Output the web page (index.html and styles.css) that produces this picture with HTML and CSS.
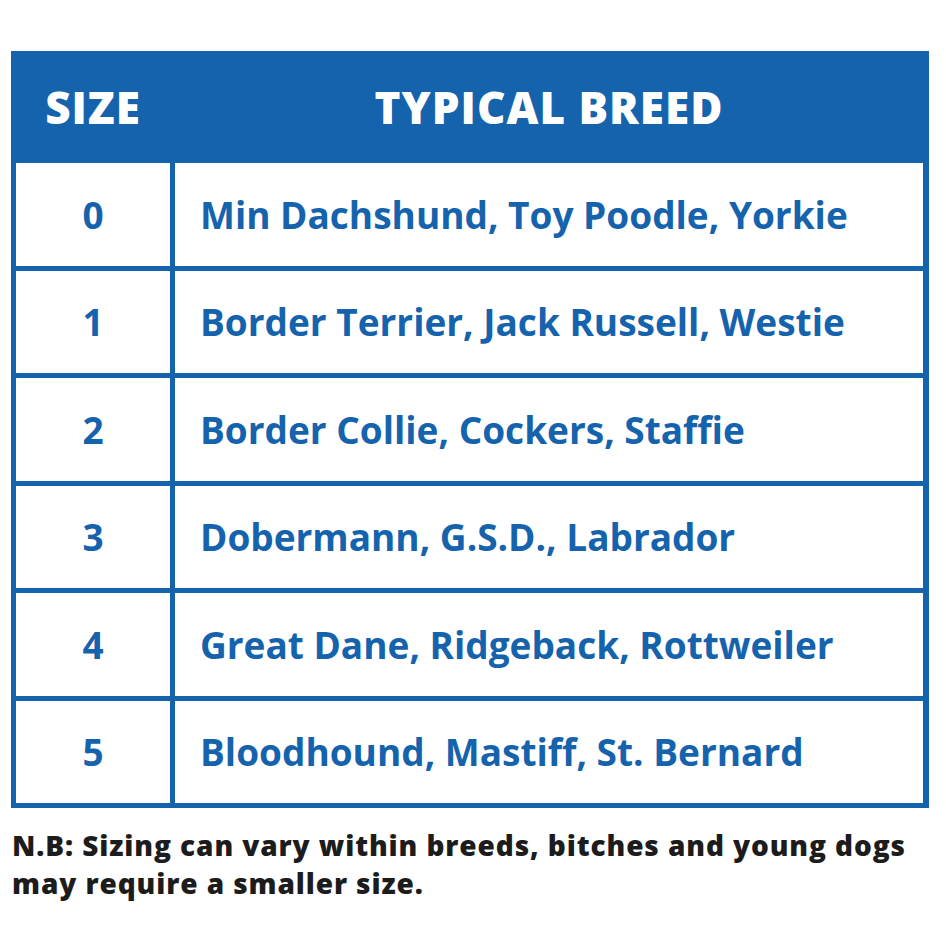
FILE: index.html
```html
<!DOCTYPE html>
<html lang="en">
<head>
<meta charset="utf-8">
<title>Dog size chart</title>
<link rel="stylesheet" href="styles.css">
</head>
<body>
<div class="chart">
  <div class="head">
    <div class="hcell">SIZE</div>
    <div class="hcell">TYPICAL BREED</div>
  </div>
  <div class="body">
    <div class="cell size">0</div><div class="cell breed">Min Dachshund, Toy Poodle, Yorkie</div>
    <div class="cell size">1</div><div class="cell breed">Border Terrier, Jack Russell, Westie</div>
    <div class="cell size">2</div><div class="cell breed">Border Collie, Cockers, Staffie</div>
    <div class="cell size">3</div><div class="cell breed">Dobermann, G.S.D., Labrador</div>
    <div class="cell size">4</div><div class="cell breed">Great Dane, Ridgeback, Rottweiler</div>
    <div class="cell size">5</div><div class="cell breed">Bloodhound, Mastiff, St. Bernard</div>
  </div>
</div>
<p class="note">N.B: Sizing can vary within breeds, bitches and young dogs may require a smaller size.</p>
</body>
</html>
```
FILE: styles.css
```css
html, body {
  margin: 0;
  padding: 0;
  background: #ffffff;
}
body {
  font-family: "Open Sans", Lato, "Noto Sans", sans-serif;
}
.chart {
  margin: 51px 0 0 11px;
  width: 918px;
  background: #1663ad;
}
.head {
  display: grid;
  grid-template-columns: 159px 1fr;
  height: 112px;
  padding-right: 6px;
  align-items: center;
}
.hcell {
  color: #ffffff;
  font-weight: 800;
  font-size: 44px;
  letter-spacing: 1px;
  text-align: center;
  padding-left: 5px;
}
.body {
  display: grid;
  grid-template-columns: 154px 748px;
  grid-auto-rows: 102.5px;
  gap: 5px;
  padding: 0 6px 5px 5px;
}
.cell {
  background: #ffffff;
  color: #1663ad;
  font-weight: 700;
  font-size: 37px;
  display: flex;
  align-items: center;
}
.size {
  justify-content: center;
}
.breed {
  padding-left: 25px;
}
.note {
  margin: 18px 0 0 12px;
  width: 905px;
  font-weight: 800;
  font-size: 28px;
  letter-spacing: 0.9px;
  line-height: 38px;
  color: #1c1c1c;
}
```
